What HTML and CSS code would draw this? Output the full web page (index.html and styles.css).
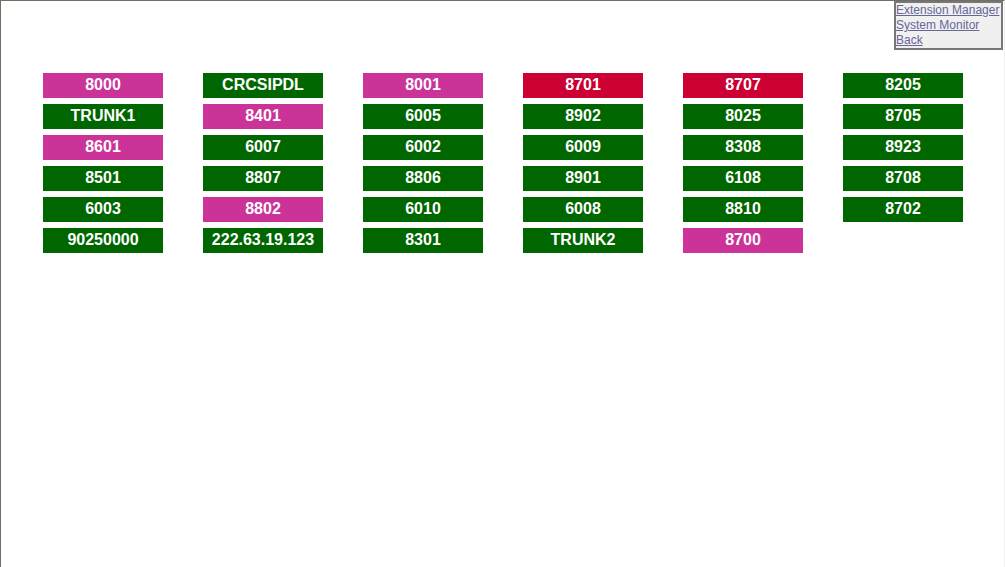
FILE: index.html
```html
<!DOCTYPE html>
<html lang="en">
<head>
<meta charset="utf-8">
<title>Extension Monitor</title>
<link rel="stylesheet" href="styles.css">
</head>
<body>
<nav class="menu">
  <a href="#extensions">Extension Manager</a>
  <a href="#system">System Monitor</a>
  <a href="#back">Back</a>
</nav>
<main>
  <ul class="extensions">
    <li class="ringing">8000</li>
    <li>CRCSIPDL</li>
    <li class="ringing">8001</li>
    <li class="busy">8701</li>
    <li class="busy">8707</li>
    <li>8205</li>
    <li>TRUNK1</li>
    <li class="ringing">8401</li>
    <li>6005</li>
    <li>8902</li>
    <li>8025</li>
    <li>8705</li>
    <li class="ringing">8601</li>
    <li>6007</li>
    <li>6002</li>
    <li>6009</li>
    <li>8308</li>
    <li>8923</li>
    <li>8501</li>
    <li>8807</li>
    <li>8806</li>
    <li>8901</li>
    <li>6108</li>
    <li>8708</li>
    <li>6003</li>
    <li class="ringing">8802</li>
    <li>6010</li>
    <li>6008</li>
    <li>8810</li>
    <li>8702</li>
    <li>90250000</li>
    <li>222.63.19.123</li>
    <li>8301</li>
    <li>TRUNK2</li>
    <li class="ringing">8700</li>
  </ul>
</main>
</body>
</html>
```
FILE: styles.css
```css
* {
  box-sizing: border-box;
}

body {
  margin: 0;
  min-height: 100vh;
  border-top: 1px solid #716f64;
  border-left: 1px solid #716f64;
  border-right: 1px solid #f0f0f0;
  background: #fff;
  font-family: Arial, "Liberation Sans", sans-serif;
}

.menu {
  position: absolute;
  top: 1px;
  right: 2px;
  display: flex;
  flex-direction: column;
  align-items: flex-start;
  min-width: 109px;
  border: 2px solid #777;
  background: #f0f0f0;
  font-size: 12px;
  line-height: 15px;
  white-space: nowrap;
}

.menu a {
  color: #666699;
}

.extensions {
  display: grid;
  grid-template-columns: repeat(6, 120px);
  justify-content: space-between;
  row-gap: 6px;
  margin: 0;
  padding: 72px 41px 72px 42px;
  list-style: none;
}

.extensions li {
  height: 25px;
  background: #006600;
  color: #fff;
  font-size: 16px;
  font-weight: bold;
  line-height: 24px;
  text-align: center;
}

.extensions .ringing {
  background: #cc3399;
}

.extensions .busy {
  background: #cc0033;
}
```
